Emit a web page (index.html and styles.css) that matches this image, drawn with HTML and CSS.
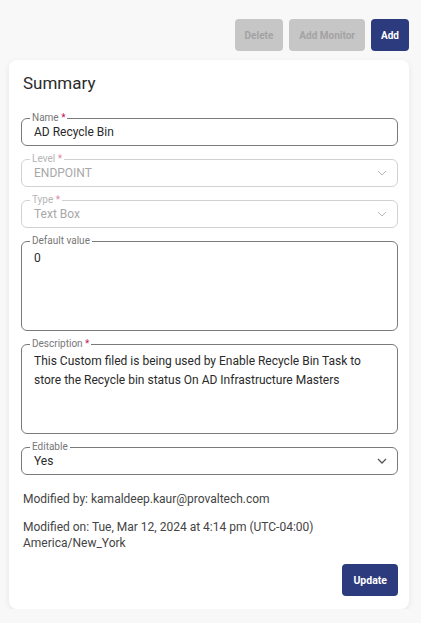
FILE: index.html
```html
<!DOCTYPE html>
<html lang="en">
<head>
    <meta charset="UTF-8">
    <meta name="viewport" content="width=device-width, initial-scale=1.0">
    <title>Custom Field Summary</title>
    <link rel="stylesheet" href="styles.css">
</head>
<body>
    <div class="page">
        <div class="toolbar">
            <button class="btn btn-disabled" disabled>Delete</button>
            <button class="btn btn-disabled" disabled>Add Monitor</button>
            <button class="btn btn-primary">Add</button>
        </div>
        <section class="card">
            <h2 class="card-title">Summary</h2>
            <fieldset class="field">
                <legend>Name <span class="req">*</span></legend>
                <div class="field-value">AD Recycle Bin</div>
            </fieldset>
            <fieldset class="field field-disabled">
                <legend>Level <span class="req">*</span></legend>
                <div class="field-value field-select">
                    <span>ENDPOINT</span>
                    <svg class="chevron" width="10" height="6" viewBox="0 0 10 6"><path d="M1 1l4 4 4-4" fill="none" stroke="currentColor" stroke-width="1"/></svg>
                </div>
            </fieldset>
            <fieldset class="field field-disabled">
                <legend>Type <span class="req">*</span></legend>
                <div class="field-value field-select">
                    <span>Text Box</span>
                    <svg class="chevron" width="10" height="6" viewBox="0 0 10 6"><path d="M1 1l4 4 4-4" fill="none" stroke="currentColor" stroke-width="1"/></svg>
                </div>
            </fieldset>
            <fieldset class="field field-area">
                <legend>Default value</legend>
                <div class="field-value">0</div>
            </fieldset>
            <fieldset class="field field-area field-desc">
                <legend>Description <span class="req">*</span></legend>
                <div class="field-value">This Custom filed is being used by Enable Recycle Bin Task to store the Recycle bin status On AD Infrastructure Masters</div>
            </fieldset>
            <fieldset class="field">
                <legend>Editable</legend>
                <div class="field-value field-select">
                    <span>Yes</span>
                    <svg class="chevron" width="10" height="6" viewBox="0 0 10 6"><path d="M1 1l4 4 4-4" fill="none" stroke="currentColor" stroke-width="1.3"/></svg>
                </div>
            </fieldset>
            <p class="meta">Modified by: kamaldeep.kaur@provaltech.com</p>
            <p class="meta meta-on">Modified on: Tue, Mar 12, 2024 at 4:14 pm (UTC-04:00) America/New_York</p>
            <div class="card-actions">
                <button class="btn btn-primary btn-update">Update</button>
            </div>
        </section>
    </div>
</body>
</html>
```

FILE: styles.css
```css
*,
*::before,
*::after {
    box-sizing: border-box;
    padding: 0;
    margin: 0;
}

body {
    background-color: #f8f8f8;
    font-family: Roboto, "Noto Sans", sans-serif;
    color: #333;
}

.page {
    padding: 19px 12px 0 9px;
}

.toolbar {
    display: flex;
    justify-content: flex-end;
    gap: 6px;
    margin-bottom: 9px;
}

.btn {
    height: 32px;
    padding: 0 10px;
    border: none;
    border-radius: 4px;
    font-family: inherit;
    font-size: 10px;
    font-weight: 700;
}

.btn-disabled {
    background-color: #c6c6c6;
    color: #a3a3a3;
}

.btn-primary {
    background-color: #2c3a7e;
    color: #fff;
}

.card {
    background-color: #fff;
    border-radius: 8px;
    box-shadow: 0 2px 6px rgba(0, 0, 0, 0.08);
    padding: 11px 11px 13px 12px;
}

.card-title {
    font-size: 17px;
    font-weight: 400;
    line-height: 24px;
    color: #2b2b2b;
    padding-left: 2px;
    margin-bottom: 18px;
}

.field {
    border: 1px solid #7a7a7a;
    border-radius: 6px;
    padding: 0 12px 4px 12px;
    margin-bottom: 8px;
    min-width: 0;
}

.field legend {
    font-size: 10px;
    line-height: 10px;
    color: #777;
    padding: 0 2px;
    margin-left: -4px;
}

.req {
    color: #c2185b;
}

.field-value {
    font-size: 12px;
    line-height: 18px;
    color: #2a2a2a;
}

.field-select {
    display: flex;
    justify-content: space-between;
    align-items: center;
}

.chevron {
    margin-right: -2px;
    color: #555;
}

.field-disabled {
    border-color: #d2d2d2;
}

.field-disabled legend {
    color: #b5b5b5;
}

.field-disabled .req {
    color: #dc8aa6;
}

.field-disabled .field-value {
    color: #a8a8a8;
}

.field-disabled .chevron {
    color: #b8b8b8;
}

.field-area {
    height: 95px;
}

.field-area .field-value {
    line-height: 19px;
    padding-top: 3px;
    padding-right: 20px;
}

.field-desc {
    height: 95px;
}

.meta {
    font-size: 12px;
    line-height: 16px;
    color: #444;
    padding-left: 2px;
    margin-top: 16px;
}

.meta-on {
    margin-top: 12px;
    padding-right: 40px;
}

.card-actions {
    display: flex;
    justify-content: flex-end;
    margin-top: 13px;
}

.btn-update {
    font-size: 10.5px;
    padding: 0 11px;
}
```
